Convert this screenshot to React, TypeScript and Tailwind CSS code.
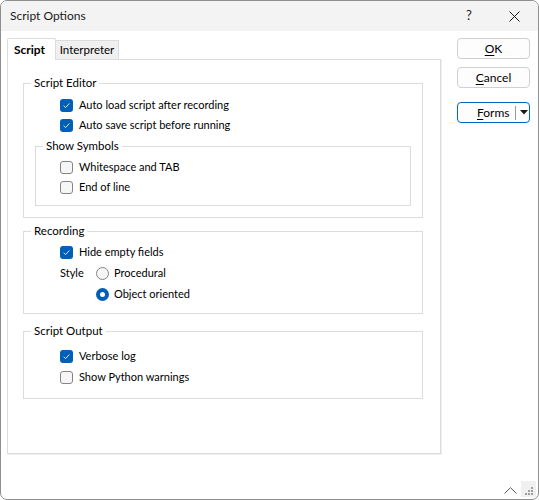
import React from "react";

function Check({ checked }: { checked: boolean }) {
  if (checked) {
    return (
      <span className="w-[13px] h-[13px] shrink-0 rounded-[3px] bg-[#005fb8] flex items-center justify-center">
        <svg width="9" height="9" viewBox="0 0 9 9">
          <path d="M1.6 4.7 L3.6 6.6 L7.4 2.4" stroke="#dbe9f7" strokeWidth="1" fill="none" />
        </svg>
      </span>
    );
  }
  return <span className="w-[13px] h-[13px] shrink-0 rounded-[3px] border border-[#858585] bg-[#f6f6f6]" />;
}

function Radio({ checked }: { checked: boolean }) {
  if (checked) {
    return (
      <span className="w-[13px] h-[13px] shrink-0 rounded-full bg-[#005fb8] flex items-center justify-center">
        <span className="w-[5px] h-[5px] rounded-full bg-white" />
      </span>
    );
  }
  return <span className="w-[13px] h-[13px] shrink-0 rounded-full border border-[#858585] bg-[#f6f6f6]" />;
}

function CheckRow({ checked, label, h }: { checked: boolean; label: string; h: string }) {
  return (
    <div className={`flex items-center gap-[6px] ${h}`}>
      <Check checked={checked} />
      <span>{label}</span>
    </div>
  );
}

function Group({ label, className, children }: { label: string; className: string; children: React.ReactNode }) {
  return (
    <div className={`relative border border-[#dcdcdc] ${className}`}>
      <span className="absolute -top-[9px] left-[7px] bg-white px-[3px] leading-[16px] text-[11.5px]">{label}</span>
      {children}
    </div>
  );
}

export default function App() {
  return (
    <div className="w-[539px] h-[500px] bg-white border border-[#8f8f8f] rounded-[7px] overflow-hidden flex flex-col text-[11px] text-black font-['Lato','Noto_Sans',sans-serif]">
      {/* Title bar */}
      <div className="h-[30px] shrink-0 bg-[#f3f3f3] flex items-center">
        <span className="ml-[9px] text-[12px] text-[#1a1a1a]">Script Options</span>
        <div className="ml-auto flex items-center">
          <span className="w-[20px] text-center text-[13px] text-[#1a1a1a] mr-[30px]">?</span>
          <svg width="11" height="11" viewBox="0 0 11 11" className="mr-[18px]">
            <path d="M0.5 0.5 L10.5 10.5 M10.5 0.5 L0.5 10.5" stroke="#1a1a1a" strokeWidth="1" />
          </svg>
        </div>
      </div>

      {/* Body */}
      <div className="flex-1 flex">
        <div className="pl-[6px] pt-[7px]">
          {/* Tabs */}
          <div className="flex items-end h-[21px]">
            <div className="relative z-10 w-[49px] h-[22px] -mb-px border border-b-0 border-[#dcdcdc] bg-white pl-[6px] flex items-center font-bold text-[12px] rounded-t-[2px]">
              Script
            </div>
            <div className="w-[63px] h-[19px] border border-l-0 border-b-0 border-[#dcdcdc] bg-[#f0f0f0] flex items-center justify-center text-[11.5px]">
              Interpreter
            </div>
          </div>
          {/* Panel */}
          <div className="w-[434px] h-[395px] border border-[#dcdcdc] shadow-[1px_1px_0_#eeeeee] pt-[23px] pl-[15px]">
            <Group label="Script Editor" className="w-[400px] pt-[11px] pl-[36px] pb-[11px]">
              <CheckRow checked label="Auto load script after recording" h="h-[20px]" />
              <CheckRow checked label="Auto save script before running" h="h-[20px]" />
              <Group label="Show Symbols" className="mt-[11px] -ml-[25px] w-[376px] pt-[10px] pl-[24px] pb-[8px]">
                <CheckRow checked={false} label="Whitespace and TAB" h="h-[20px]" />
                <CheckRow checked={false} label="End of line" h="h-[20px]" />
              </Group>
            </Group>

            <Group label="Recording" className="mt-[13px] w-[400px] pt-[10px] pl-[36px] pb-[8px]">
              <CheckRow checked label="Hide empty fields" h="h-[21px]" />
              <div className="grid grid-cols-[36px_auto] items-center">
                <span className="h-[21px] flex items-center">Style</span>
                <div className="h-[21px] flex items-center gap-[5px]">
                  <Radio checked={false} />
                  <span>Procedural</span>
                </div>
                <span />
                <div className="h-[21px] flex items-center gap-[5px]">
                  <Radio checked />
                  <span>Object oriented</span>
                </div>
              </div>
            </Group>

            <Group label="Script Output" className="mt-[17px] w-[400px] pt-[14px] pl-[36px] pb-[10px]">
              <CheckRow checked label="Verbose log" h="h-[21px]" />
              <CheckRow checked={false} label="Show Python warnings" h="h-[21px]" />
            </Group>
          </div>
        </div>

        {/* Buttons */}
        <div className="ml-[16px] pt-[7px] w-[73px] flex flex-col text-[12px]">
          <div className="h-[21px] rounded-[4px] border border-[#d0d0d0] bg-[#fdfdfd] flex items-center justify-center">
            <span>
              <span className="underline underline-offset-2">O</span>K
            </span>
          </div>
          <div className="mt-[8px] h-[21px] rounded-[4px] border border-[#d0d0d0] bg-[#fdfdfd] flex items-center justify-center">
            <span>
              <span className="underline underline-offset-2">C</span>ancel
            </span>
          </div>
          <div className="mt-[14px] h-[21px] rounded-[4px] border border-[#0067c0] bg-[#fdfdfd] flex items-center">
            <span className="ml-[19px]">
              <span className="underline underline-offset-2">F</span>orms
            </span>
            <span className="ml-[5px] w-px h-[14px] bg-[#9a9a9a]" />
            <svg width="8" height="5" viewBox="0 0 8 5" className="ml-[4px]">
              <path d="M0 0 L8 0 L4 4.5 Z" fill="#1a1a1a" />
            </svg>
          </div>
        </div>
      </div>

      {/* Footer */}
      <div className="h-[18px] shrink-0 flex items-center justify-end">
        <svg width="13" height="7" viewBox="0 0 13 7" className="mr-[4px]">
          <path d="M0.5 6.5 L6.5 0.7 L12.5 6.5" stroke="#555" strokeWidth="1" fill="none" />
        </svg>
        <div className="w-[15px] h-[16px] bg-[#f0f0f0] mr-[2px] mb-[2px] relative">
          <svg width="15" height="16" viewBox="0 0 15 16">
            <rect x="10" y="6" width="2" height="2" fill="#a0a0a0" />
            <rect x="7" y="9" width="2" height="2" fill="#a0a0a0" />
            <rect x="10" y="9" width="2" height="2" fill="#a0a0a0" />
            <rect x="4" y="12" width="2" height="2" fill="#a0a0a0" />
            <rect x="7" y="12" width="2" height="2" fill="#a0a0a0" />
            <rect x="10" y="12" width="2" height="2" fill="#a0a0a0" />
          </svg>
        </div>
      </div>
    </div>
  );
}
